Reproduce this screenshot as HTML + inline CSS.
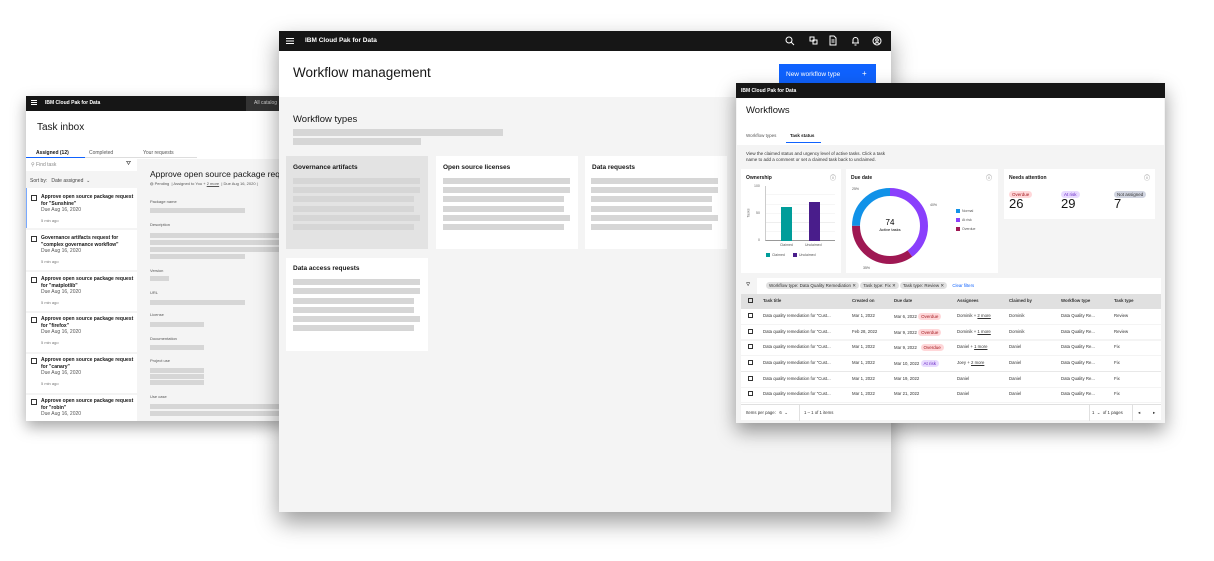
<!DOCTYPE html>
<html><head><meta charset="utf-8"><style>
*{box-sizing:border-box;margin:0;padding:0}
body{width:1214px;height:561px;background:#fff;position:relative;overflow:hidden;font-family:"Liberation Sans",sans-serif;color:#161616}
.a{position:absolute}
.win{position:absolute;overflow:hidden}
.bar{position:absolute;background:#d6d6d6;height:7px}
.hdr{position:absolute;left:0;right:0;top:0;background:#161616;color:#fff;font-weight:bold}
.t{position:absolute;white-space:nowrap}
.cb{position:absolute;width:6px;height:6px;border:1px solid #333}
.tag{display:inline-block;border-radius:6px;padding:0 3px;font-size:4.5px;line-height:7px}
</style></head><body>

<!-- LEFT WINDOW -->
<div class="win" style="left:26px;top:96px;width:260px;height:325px;background:#fff;box-shadow:0 6px 14px rgba(0,0,0,.35)">
 <div class="hdr" style="height:15px;font-size:5px">
  <div class="t" style="left:5px;top:4px;width:6px;height:1px;background:#fff;box-shadow:0 2px #fff,0 4px #fff"></div>
  <div class="t" style="left:19px;top:4px">IBM Cloud Pak for Data</div>
  <div class="a" style="left:220px;top:0;width:40px;height:15px;background:#333"></div>
  <div class="t" style="left:228px;top:4px;font-weight:normal;color:#ccc">All catalog</div>
 </div>
 <div class="t" style="left:11px;top:26px;font-size:10px">Task inbox</div>
 <div class="t" style="left:10px;top:54px;font-size:5px;font-weight:bold">Assigned (12)</div>
 <div class="t" style="left:63px;top:54px;font-size:5px;color:#555">Completed</div>
 <div class="t" style="left:117px;top:54px;font-size:5px;color:#555">Your requests</div>
 <div class="a" style="left:0;top:61px;width:59px;height:1px;background:#0f62fe"></div>
 <div class="a" style="left:59px;top:61px;width:112px;height:1px;background:#ddd"></div>
 <div class="a" style="left:0;top:63px;width:111px;height:262px;background:#f4f4f4"></div>
 <div class="a" style="left:0;top:63px;width:111px;height:12px;background:#fff"></div>
 <div class="t" style="left:5px;top:66px;font-size:5px;color:#888">⚲ Find task</div>
 <div class="t" style="left:100px;top:65px;font-size:6px">⛛</div>
 <div class="t" style="left:4px;top:82px;font-size:5px;color:#444">Sort by: &nbsp; Date assigned &nbsp;⌄</div>
 <div class="a" style="left:111px;top:63px;width:149px;height:262px;background:#f4f4f4"></div>
 <!-- list items -->
 <div class="a" style="left:0;top:92px;width:111px;height:233px;font-size:5px">
  <div class="a" style="left:0;top:0;width:111px;height:40px;background:#fff;border-left:1px solid #78a9ff"></div>
  <div class="a" style="left:0;top:42px;width:111px;height:40px;background:#fff"></div>
  <div class="a" style="left:0;top:84px;width:111px;height:39px;background:#fff"></div>
  <div class="a" style="left:0;top:125px;width:111px;height:39px;background:#fff"></div>
  <div class="a" style="left:0;top:166px;width:111px;height:39px;background:#fff"></div>
  <div class="a" style="left:0;top:207px;width:111px;height:30px;background:#fff"></div>
 </div>
 <div class="a" style="left:0;top:92px;font-size:5px;line-height:6.5px">
  <div class="cb" style="left:5px;top:7px"></div><div class="t" style="left:15px;top:6px;font-weight:bold">Approve open source package request<br>for "Sunshine"</div><div class="t" style="left:15px;top:19px;color:#555">Due Aug 16, 2020</div><div class="t" style="left:15px;top:30px;color:#777;font-size:4px">5 min ago</div>
  <div class="cb" style="left:5px;top:48px"></div><div class="t" style="left:15px;top:47px;font-weight:bold">Governance artifacts request for<br>"complex governance workflow"</div><div class="t" style="left:15px;top:60px;color:#555">Due Aug 16, 2020</div><div class="t" style="left:15px;top:71px;color:#777;font-size:4px">5 min ago</div>
  <div class="cb" style="left:5px;top:89px"></div><div class="t" style="left:15px;top:88px;font-weight:bold">Approve open source package request<br>for "matplotlib"</div><div class="t" style="left:15px;top:101px;color:#555">Due Aug 16, 2020</div><div class="t" style="left:15px;top:112px;color:#777;font-size:4px">5 min ago</div>
  <div class="cb" style="left:5px;top:129px"></div><div class="t" style="left:15px;top:128px;font-weight:bold">Approve open source package request<br>for "firefox"</div><div class="t" style="left:15px;top:141px;color:#555">Due Aug 16, 2020</div><div class="t" style="left:15px;top:152px;color:#777;font-size:4px">5 min ago</div>
  <div class="cb" style="left:5px;top:170px"></div><div class="t" style="left:15px;top:169px;font-weight:bold">Approve open source package request<br>for "canary"</div><div class="t" style="left:15px;top:182px;color:#555">Due Aug 16, 2020</div><div class="t" style="left:15px;top:193px;color:#777;font-size:4px">5 min ago</div>
  <div class="cb" style="left:5px;top:211px"></div><div class="t" style="left:15px;top:210px;font-weight:bold">Approve open source package request<br>for "robin"</div><div class="t" style="left:15px;top:223px;color:#555">Due Aug 16, 2020</div>
 </div>
 <!-- detail -->
 <div class="t" style="left:124px;top:73px;font-size:8.5px">Approve open source package request fo</div>
 <div class="t" style="left:124px;top:85px;font-size:4px;color:#555">◍ Pending &nbsp;| Assigned to You + <u>2 more</u> &nbsp;| Due Aug 16, 2020 |</div>
 <div class="t" style="left:124px;top:103px;font-size:4px;color:#555">Package name</div>
 <div class="bar" style="left:124px;top:112px;width:95px;height:5px"></div>
 <div class="t" style="left:124px;top:126px;font-size:4px;color:#555">Description</div>
 <div class="bar" style="left:124px;top:137px;width:136px;height:5px"></div>
 <div class="bar" style="left:124px;top:144px;width:136px;height:5px"></div>
 <div class="bar" style="left:124px;top:151px;width:136px;height:5px"></div>
 <div class="bar" style="left:124px;top:158px;width:95px;height:5px"></div>
 <div class="t" style="left:124px;top:172px;font-size:4px;color:#555">Version</div>
 <div class="bar" style="left:124px;top:180px;width:19px;height:5px"></div>
 <div class="t" style="left:124px;top:194px;font-size:4px;color:#555">URL</div>
 <div class="bar" style="left:124px;top:204px;width:95px;height:5px"></div>
 <div class="t" style="left:124px;top:216px;font-size:4px;color:#555">License</div>
 <div class="bar" style="left:124px;top:226px;width:54px;height:5px"></div>
 <div class="t" style="left:124px;top:240px;font-size:4px;color:#555">Documentation</div>
 <div class="bar" style="left:124px;top:249px;width:54px;height:5px"></div>
 <div class="t" style="left:124px;top:262px;font-size:4px;color:#555">Project use</div>
 <div class="bar" style="left:124px;top:272px;width:54px;height:5px"></div>
 <div class="bar" style="left:124px;top:278px;width:54px;height:5px"></div>
 <div class="bar" style="left:124px;top:284px;width:54px;height:5px"></div>
 <div class="t" style="left:124px;top:298px;font-size:4px;color:#555">Use case</div>
 <div class="bar" style="left:124px;top:308px;width:136px;height:5px"></div>
 <div class="bar" style="left:124px;top:315px;width:136px;height:5px"></div>
</div>

<!-- CENTER WINDOW -->
<div class="win" style="left:279px;top:31px;width:612px;height:481px;background:#f4f4f4;box-shadow:0 10px 22px rgba(0,0,0,.4)">
 <div class="hdr" style="height:20px;font-size:6.5px">
  <div class="a" style="left:7px;top:7px;width:8px;height:1px;background:#fff;box-shadow:0 2.5px #fff,0 5px #fff"></div>
  <div class="t" style="left:26px;top:6px">IBM <span>Cloud Pak for Data</span></div>
  <svg class="a" style="left:503px;top:4px" width="100" height="12" viewBox="0 0 100 12" fill="none" stroke="#fff" stroke-width="1">
   <circle cx="7" cy="5" r="3"/><path d="M9 7l3 3"/>
   <rect x="28" y="2" width="4" height="4"/><rect x="31" y="5" width="4" height="4"/>
   <path d="M48 1h4l2 2v7h-6z M49.5 5h3 M49.5 7h3"/>
   <path d="M70 8h7 M71 8V5a2.5 2.5 0 0 1 5 0v3 M72.5 10h2"/>
   <circle cx="95" cy="6" r="4"/><circle cx="95" cy="5" r="1.3"/><path d="M92.5 9a3 3 0 0 1 5 0"/>
  </svg>
 </div>
 <div class="a" style="left:0;top:20px;width:612px;height:46px;background:#fff"></div>
 <div class="t" style="left:14px;top:34px;font-size:13.5px">Workflow management</div>
 <div class="a" style="left:500px;top:33px;width:97px;height:22px;background:#0f62fe;color:#fff;font-size:6.5px">
  <span class="t" style="left:7px;top:7px">New workflow type</span><span class="t" style="left:83px;top:5px;font-size:8px">+</span></div>
 <div class="t" style="left:14px;top:83px;font-size:9.5px">Workflow types</div>
 <div class="bar" style="left:14px;top:98px;width:210px"></div>
 <div class="bar" style="left:14px;top:107px;width:128px"></div>
 <div class="a" style="left:7px;top:125px;width:142px;height:93px;background:#e3e3e3"></div>
 <div class="a" style="left:157px;top:125px;width:142px;height:93px;background:#fff"></div>
 <div class="a" style="left:306px;top:125px;width:142px;height:93px;background:#fff"></div>
 <div class="a" style="left:7px;top:227px;width:142px;height:93px;background:#fff"></div>
 <div class="t" style="left:14px;top:133px;font-size:6.5px;font-weight:bold">Governance artifacts</div>
 <div class="t" style="left:164px;top:133px;font-size:6.5px;font-weight:bold">Open source licenses</div>
 <div class="t" style="left:313px;top:133px;font-size:6.5px;font-weight:bold">Data requests</div>
 <div class="t" style="left:14px;top:234px;font-size:6.5px;font-weight:bold">Data access requests</div>
 <div class="a" style="left:14px;top:147px">
  <div class="bar" style="left:0;top:0;width:127px;height:6px"></div><div class="bar" style="left:0;top:9px;width:127px;height:6px"></div><div class="bar" style="left:0;top:18px;width:121px;height:6px"></div><div class="bar" style="left:0;top:28px;width:121px;height:6px"></div><div class="bar" style="left:0;top:37px;width:127px;height:6px"></div><div class="bar" style="left:0;top:46px;width:121px;height:6px"></div>
 </div>
 <div class="a" style="left:164px;top:147px">
  <div class="bar" style="left:0;top:0;width:127px;height:6px"></div><div class="bar" style="left:0;top:9px;width:127px;height:6px"></div><div class="bar" style="left:0;top:18px;width:121px;height:6px"></div><div class="bar" style="left:0;top:28px;width:121px;height:6px"></div><div class="bar" style="left:0;top:37px;width:127px;height:6px"></div><div class="bar" style="left:0;top:46px;width:121px;height:6px"></div>
 </div>
 <div class="a" style="left:312px;top:147px">
  <div class="bar" style="left:0;top:0;width:127px;height:6px"></div><div class="bar" style="left:0;top:9px;width:127px;height:6px"></div><div class="bar" style="left:0;top:18px;width:121px;height:6px"></div><div class="bar" style="left:0;top:28px;width:121px;height:6px"></div><div class="bar" style="left:0;top:37px;width:127px;height:6px"></div><div class="bar" style="left:0;top:46px;width:121px;height:6px"></div>
 </div>
 <div class="a" style="left:14px;top:248px">
  <div class="bar" style="left:0;top:0;width:127px;height:6px"></div><div class="bar" style="left:0;top:9px;width:127px;height:6px"></div><div class="bar" style="left:0;top:19px;width:121px;height:6px"></div><div class="bar" style="left:0;top:28px;width:121px;height:6px"></div><div class="bar" style="left:0;top:37px;width:127px;height:6px"></div><div class="bar" style="left:0;top:46px;width:121px;height:6px"></div>
 </div>
</div>

<!-- RIGHT WINDOW -->
<div class="win" style="left:736px;top:83px;width:429px;height:340px;background:#f4f4f4;box-shadow:0 8px 18px rgba(0,0,0,.4)">
 <div class="hdr" style="height:15px;font-size:5px"><div class="t" style="left:5px;top:5px">IBM Cloud Pak for Data</div></div>
 <div class="a" style="left:1px;top:15px;width:427px;height:47px;background:#fff"></div>
 <div class="t" style="left:10px;top:22px;font-size:9.5px">Workflows</div>
 <div class="t" style="left:10px;top:50px;font-size:4.5px;color:#555">Workflow types</div>
 <div class="t" style="left:54px;top:50px;font-size:4.5px;font-weight:bold">Task status</div>
 <div class="a" style="left:50px;top:59px;width:35px;height:1px;background:#0f62fe"></div>
 <div class="t" style="left:10px;top:68px;font-size:4.5px;line-height:6px;color:#333">View the claimed status and urgency level of active tasks. Click a task<br>name to add a comment or set a claimed task back to unclaimed.</div>
 <!-- ownership -->
 <div class="a" style="left:5px;top:86px;width:100px;height:104px;background:#fff">
  <div class="t" style="left:5px;top:6px;font-size:5px;font-weight:bold">Ownership</div>
  <div class="t" style="left:89px;top:4px;font-size:6px;color:#555">ⓘ</div>
  <div class="t" style="left:13px;top:15px;font-size:3.5px;color:#666">100</div>
  <div class="t" style="left:15px;top:42px;font-size:3.5px;color:#666">50</div>
  <div class="t" style="left:17px;top:69px;font-size:3.5px;color:#666">0</div>
  <div class="t" style="left:3px;top:42px;font-size:3.5px;color:#666;transform:rotate(-90deg)">Tasks</div>
  <div class="a" style="left:24px;top:17px;width:70px;height:55px;border-left:1px solid #ccc;border-bottom:1px solid #999;background:repeating-linear-gradient(#fff 0 8.6px,#eee 8.6px 9.2px)"></div>
  <div class="a" style="left:40px;top:38px;width:11px;height:34px;background:#009d9a"></div>
  <div class="a" style="left:68px;top:33px;width:11px;height:39px;background:#491d8b"></div>
  <div class="t" style="left:39px;top:74px;font-size:3.5px;color:#555">Claimed</div>
  <div class="t" style="left:64px;top:74px;font-size:3.5px;color:#555">Unclaimed</div>
  <div class="a" style="left:25px;top:84px;width:4px;height:4px;background:#009d9a"></div><div class="t" style="left:31px;top:84px;font-size:3.5px;color:#555">Claimed</div>
  <div class="a" style="left:52px;top:84px;width:4px;height:4px;background:#491d8b"></div><div class="t" style="left:58px;top:84px;font-size:3.5px;color:#555">Unclaimed</div>
 </div>
 <!-- due date -->
 <div class="a" style="left:110px;top:86px;width:152px;height:104px;background:#fff">
  <div class="t" style="left:5px;top:6px;font-size:5px;font-weight:bold">Due date</div>
  <div class="t" style="left:140px;top:4px;font-size:6px;color:#555">ⓘ</div>
  <svg class="a" style="left:3px;top:16px" width="82" height="82" viewBox="0 0 82 82">
   <g transform="rotate(-90 41 41)" fill="none" stroke-width="8">
    <circle cx="41" cy="41" r="34" stroke="#8a3ffc" stroke-dasharray="85.4 213.6" stroke-dashoffset="0"/>
    <circle cx="41" cy="41" r="34" stroke="#9f1853" stroke-dasharray="74.8 213.6" stroke-dashoffset="-85.4"/>
    <circle cx="41" cy="41" r="34" stroke="#1192e8" stroke-dasharray="53.4 213.6" stroke-dashoffset="-160.2"/>
   </g>
   <text x="41" y="40" text-anchor="middle" font-size="8" font-family="Liberation Sans">74</text>
   <text x="41" y="46" text-anchor="middle" font-size="4" font-family="Liberation Sans">Active tasks</text>
  </svg>
  <div class="t" style="left:6px;top:18px;font-size:3.5px;color:#555">25%</div>
  <div class="t" style="left:84px;top:34px;font-size:3.5px;color:#555">40%</div>
  <div class="t" style="left:17px;top:97px;font-size:3.5px;color:#555">35%</div>
  <div class="a" style="left:110px;top:40px;width:4px;height:4px;background:#1192e8"></div><div class="t" style="left:116px;top:40px;font-size:3.5px;color:#555">Normal</div>
  <div class="a" style="left:110px;top:49px;width:4px;height:4px;background:#8a3ffc"></div><div class="t" style="left:116px;top:49px;font-size:3.5px;color:#555">At risk</div>
  <div class="a" style="left:110px;top:58px;width:4px;height:4px;background:#9f1853"></div><div class="t" style="left:116px;top:58px;font-size:3.5px;color:#555">Overdue</div>
 </div>
 <!-- needs attention -->
 <div class="a" style="left:268px;top:86px;width:151px;height:50px;background:#fff">
  <div class="t" style="left:5px;top:6px;font-size:5px;font-weight:bold">Needs attention</div>
  <div class="t" style="left:140px;top:4px;font-size:6px;color:#555">ⓘ</div>
  <div class="t" style="left:5px;top:14px"><span class="tag" style="background:#ffd7d9;color:#a2191f">Overdue</span></div>
  <div class="t" style="left:57px;top:14px"><span class="tag" style="background:#e8daff;color:#6929c4">At risk</span></div>
  <div class="t" style="left:110px;top:14px"><span class="tag" style="background:#d0d4e0;color:#333">Not assigned</span></div>
  <div class="t" style="left:5px;top:27px;font-size:13px">26</div>
  <div class="t" style="left:57px;top:27px;font-size:13px">29</div>
  <div class="t" style="left:110px;top:27px;font-size:13px">7</div>
 </div>
 <!-- table -->
 <div class="a" style="left:5px;top:195px;width:420px;height:142px;background:#fff;font-size:4.3px">
  <div class="a" style="left:0;top:0;width:16px;height:16px;background:#f4f4f4"></div>
  <div class="t" style="left:5px;top:4px;font-size:5px">⛛</div>
  <div class="t" style="left:25px;top:4px"><span class="tag" style="background:#e0e0e0;color:#333">Workflow type: Data Quality Remediation ✕</span> <span class="tag" style="background:#e0e0e0;color:#333">Task type: Fix ✕</span> <span class="tag" style="background:#e0e0e0;color:#333">Task type: Review ✕</span> <span style="color:#0f62fe;margin-left:4px">Clear filters</span></div>
  <div class="a" style="left:0;top:16px;width:420px;height:15px;background:#e0e0e0"></div>
  <div class="a" style="left:0;top:16px;width:420px;font-weight:bold;color:#333">
   <div class="cb" style="left:7px;top:4px;width:5px;height:5px"></div>
   <span class="t" style="left:22px;top:4px">Task title</span><span class="t" style="left:111px;top:4px">Created on</span><span class="t" style="left:153px;top:4px">Due date</span><span class="t" style="left:216px;top:4px">Assignees</span><span class="t" style="left:268px;top:4px">Claimed by</span><span class="t" style="left:320px;top:4px">Workflow type</span><span class="t" style="left:373px;top:4px">Task type</span>
  </div>
  <div class="a" style="left:0;top:31px;width:420px;color:#333">
   <div class="a" style="top:0;left:0;width:420px;height:94px;background:repeating-linear-gradient(#fff 0 15px,#e8e8e8 15px 15.7px)"></div>
   <div class="a" style="top:4px;left:0;width:420px"><div class="cb" style="left:7px;top:0;width:5px;height:5px"></div><span class="t" style="left:22px">Data quality remediation for "Cust...</span><span class="t" style="left:111px">Mar 1, 2022</span><span class="t" style="left:153px">Mar 6, 2022 <span class="tag" style="background:#ffd7d9;color:#a2191f">Overdue</span></span><span class="t" style="left:216px">Dominik + <u>2 more</u></span><span class="t" style="left:268px">Dominik</span><span class="t" style="left:320px">Data Quality Re...</span><span class="t" style="left:373px">Review</span></div>
   <div class="a" style="top:20px;left:0;width:420px"><div class="cb" style="left:7px;top:0;width:5px;height:5px"></div><span class="t" style="left:22px">Data quality remediation for "Cust...</span><span class="t" style="left:111px">Feb 28, 2022</span><span class="t" style="left:153px">Mar 9, 2022 <span class="tag" style="background:#ffd7d9;color:#a2191f">Overdue</span></span><span class="t" style="left:216px">Dominik + <u>1 more</u></span><span class="t" style="left:268px">Dominik</span><span class="t" style="left:320px">Data Quality Re...</span><span class="t" style="left:373px">Review</span></div>
   <div class="a" style="top:35px;left:0;width:420px"><div class="cb" style="left:7px;top:0;width:5px;height:5px"></div><span class="t" style="left:22px">Data quality remediation for "Cust...</span><span class="t" style="left:111px">Mar 1, 2022</span><span class="t" style="left:153px">Mar 9, 2022 &nbsp;&nbsp;<span class="tag" style="background:#ffd7d9;color:#a2191f">Overdue</span></span><span class="t" style="left:216px">Daniel + <u>1 more</u></span><span class="t" style="left:268px">Daniel</span><span class="t" style="left:320px">Data Quality Re...</span><span class="t" style="left:373px">Fix</span></div>
   <div class="a" style="top:51px;left:0;width:420px"><div class="cb" style="left:7px;top:0;width:5px;height:5px"></div><span class="t" style="left:22px">Data quality remediation for "Cust...</span><span class="t" style="left:111px">Mar 1, 2022</span><span class="t" style="left:153px">Mar 10, 2022 <span class="tag" style="background:#e8daff;color:#6929c4">At risk</span></span><span class="t" style="left:216px">Joey + <u>2 more</u></span><span class="t" style="left:268px">Daniel</span><span class="t" style="left:320px">Data Quality Re...</span><span class="t" style="left:373px">Fix</span></div>
   <div class="a" style="top:67px;left:0;width:420px"><div class="cb" style="left:7px;top:0;width:5px;height:5px"></div><span class="t" style="left:22px">Data quality remediation for "Cust...</span><span class="t" style="left:111px">Mar 1, 2022</span><span class="t" style="left:153px">Mar 19, 2022</span><span class="t" style="left:216px">Daniel</span><span class="t" style="left:268px">Daniel</span><span class="t" style="left:320px">Data Quality Re...</span><span class="t" style="left:373px">Fix</span></div>
   <div class="a" style="top:82px;left:0;width:420px"><div class="cb" style="left:7px;top:0;width:5px;height:5px"></div><span class="t" style="left:22px">Data quality remediation for "Cust...</span><span class="t" style="left:111px">Mar 1, 2022</span><span class="t" style="left:153px">Mar 21, 2022</span><span class="t" style="left:216px">Daniel</span><span class="t" style="left:268px">Daniel</span><span class="t" style="left:320px">Data Quality Re...</span><span class="t" style="left:373px">Fix</span></div>
  </div>
  <div class="a" style="left:0;top:126px;width:420px;height:16px;border-top:1px solid #e0e0e0;color:#333">
   <span class="t" style="left:5px;top:5px">Items per page: &nbsp; 6 &nbsp;⌄</span>
   <div class="a" style="left:58px;top:0;width:1px;height:16px;background:#e0e0e0"></div>
   <span class="t" style="left:63px;top:5px">1 – 1 of 1 items</span>
   <div class="a" style="left:348px;top:0;width:1px;height:16px;background:#e0e0e0"></div>
   <span class="t" style="left:351px;top:5px">1 &nbsp;⌄ &nbsp;of 1 pages</span>
   <div class="a" style="left:391px;top:0;width:1px;height:16px;background:#e0e0e0"></div>
   <span class="t" style="left:397px;top:5px">◂</span><span class="t" style="left:412px;top:5px">▸</span>
  </div>
 </div>
</div>
</body></html>
